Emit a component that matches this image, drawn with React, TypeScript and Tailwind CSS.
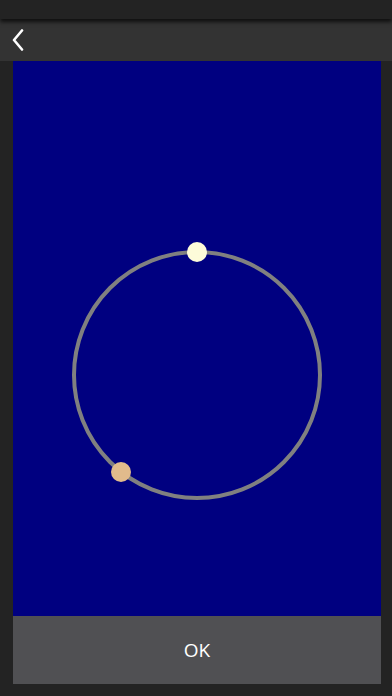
import React from 'react';

const App: React.FC = () => {
  return (
    <div className="w-[392px] h-[696px] bg-[#232323] flex flex-col overflow-hidden" style={{ fontFamily: '"Open Sans", "Liberation Sans", sans-serif' }}>
      {/* Status area */}
      <div className="h-[19px] shrink-0 bg-[#232323] shadow-[0_3px_4px_rgba(0,0,0,0.7)] relative z-10" />

      {/* Nav bar */}
      <div className="h-[42px] shrink-0 bg-[#333333] flex items-center pl-[11px]">
        <svg width="14" height="22" viewBox="0 0 14 22" fill="none">
          <path d="M11 1.5 L3 11 L11 20.5" stroke="white" strokeWidth="2.6" strokeLinecap="round" strokeLinejoin="round" />
        </svg>
      </div>

      {/* Content */}
      <div className="flex-1 flex flex-col px-[13px] pr-[11px] pb-[12px]">
        <div className="h-[555px] bg-[#000080] relative">
          <svg width="368" height="555" viewBox="0 0 368 555" className="block">
            <circle cx="184" cy="314" r="123" fill="none" stroke="#808080" strokeWidth="4" />
            <circle cx="184" cy="191" r="10" fill="#fdfbd9" />
            <circle cx="108" cy="411" r="10" fill="#e1bb8c" />
          </svg>
        </div>
        <button className="h-[68px] w-full bg-[#505053] text-white text-[19px] flex items-center justify-center">
          OK
        </button>
      </div>
    </div>
  );
};

export default App;
